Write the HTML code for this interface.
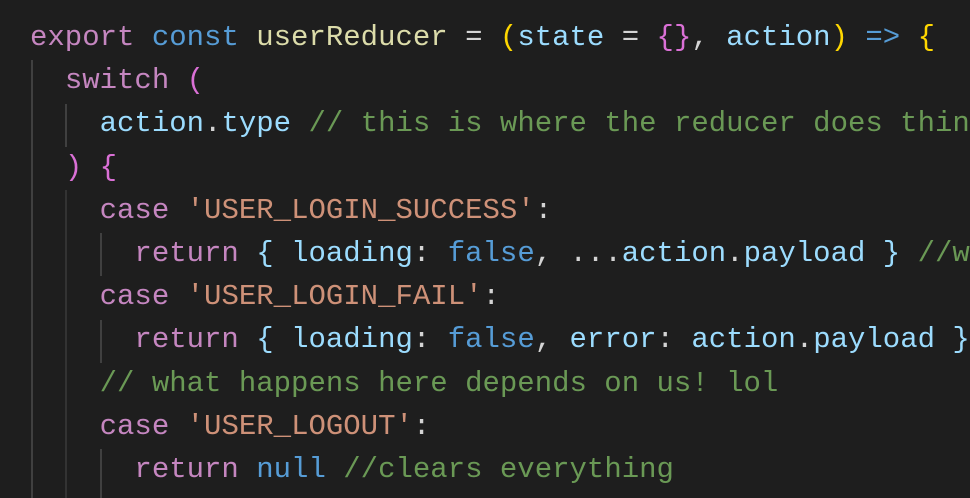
<html><head><style>
body{margin:0;background:#1e1e1e;width:970px;height:498px;overflow:hidden;position:relative}
.wrap{position:absolute;left:0;top:0;width:970px;height:498px;overflow:hidden}
pre{margin:0;position:absolute;left:30px;top:16px;font-family:"Liberation Mono",monospace;font-size:29px;line-height:43.2px;color:#d4d4d4;white-space:pre}
.k{color:#c586c0}.c{color:#569cd6}.f{color:#dcdcaa}.v{color:#9cdcfe}.m{color:#6a9955}.s{color:#ce9178}
.g{color:#ffd700}.o{color:#da70d6}.b{color:#9cdcfe}
.gd{position:absolute;width:2px;background:#404040}
</style></head><body><div class="wrap">
<div class="gd" style="left:31px;top:60px;height:440px"></div>
<div class="gd" style="left:65px;top:104px;height:43px"></div>
<div class="gd" style="left:65px;top:190px;height:310px;background:#333"></div>
<div class="gd" style="left:100px;top:233px;height:43px"></div>
<div class="gd" style="left:100px;top:320px;height:43px"></div>
<div class="gd" style="left:100px;top:449px;height:51px"></div>
<pre><span class="k">export</span> <span class="c">const</span> <span class="f">userReducer</span> = <span class="g">(</span><span class="v">state</span> = <span class="o">{}</span>, <span class="v">action</span><span class="g">)</span> <span class="c">=&gt;</span> <span class="g">{</span>
  <span class="k">switch</span> <span class="o">(</span>
    <span class="v">action</span>.<span class="v">type</span> <span class="m">// this is where the reducer does thin</span>
  <span class="o">)</span> <span class="o">{</span>
    <span class="k">case</span> <span class="s">'USER_LOGIN_SUCCESS'</span>:
      <span class="k">return</span> <span class="b">{</span> <span class="v">loading</span>: <span class="c">false</span>, ...<span class="v">action</span>.<span class="v">payload</span> <span class="b">}</span> <span class="m">//w</span>
    <span class="k">case</span> <span class="s">'USER_LOGIN_FAIL'</span>:
      <span class="k">return</span> <span class="b">{</span> <span class="v">loading</span>: <span class="c">false</span>, <span class="v">error</span>: <span class="v">action</span>.<span class="v">payload</span> <span class="b">}</span>
    <span class="m">// what happens here depends on us! lol</span>
    <span class="k">case</span> <span class="s">'USER_LOGOUT'</span>:
      <span class="k">return</span> <span class="c">null</span> <span class="m">//clears everything</span>
</pre>
</div></body></html>
